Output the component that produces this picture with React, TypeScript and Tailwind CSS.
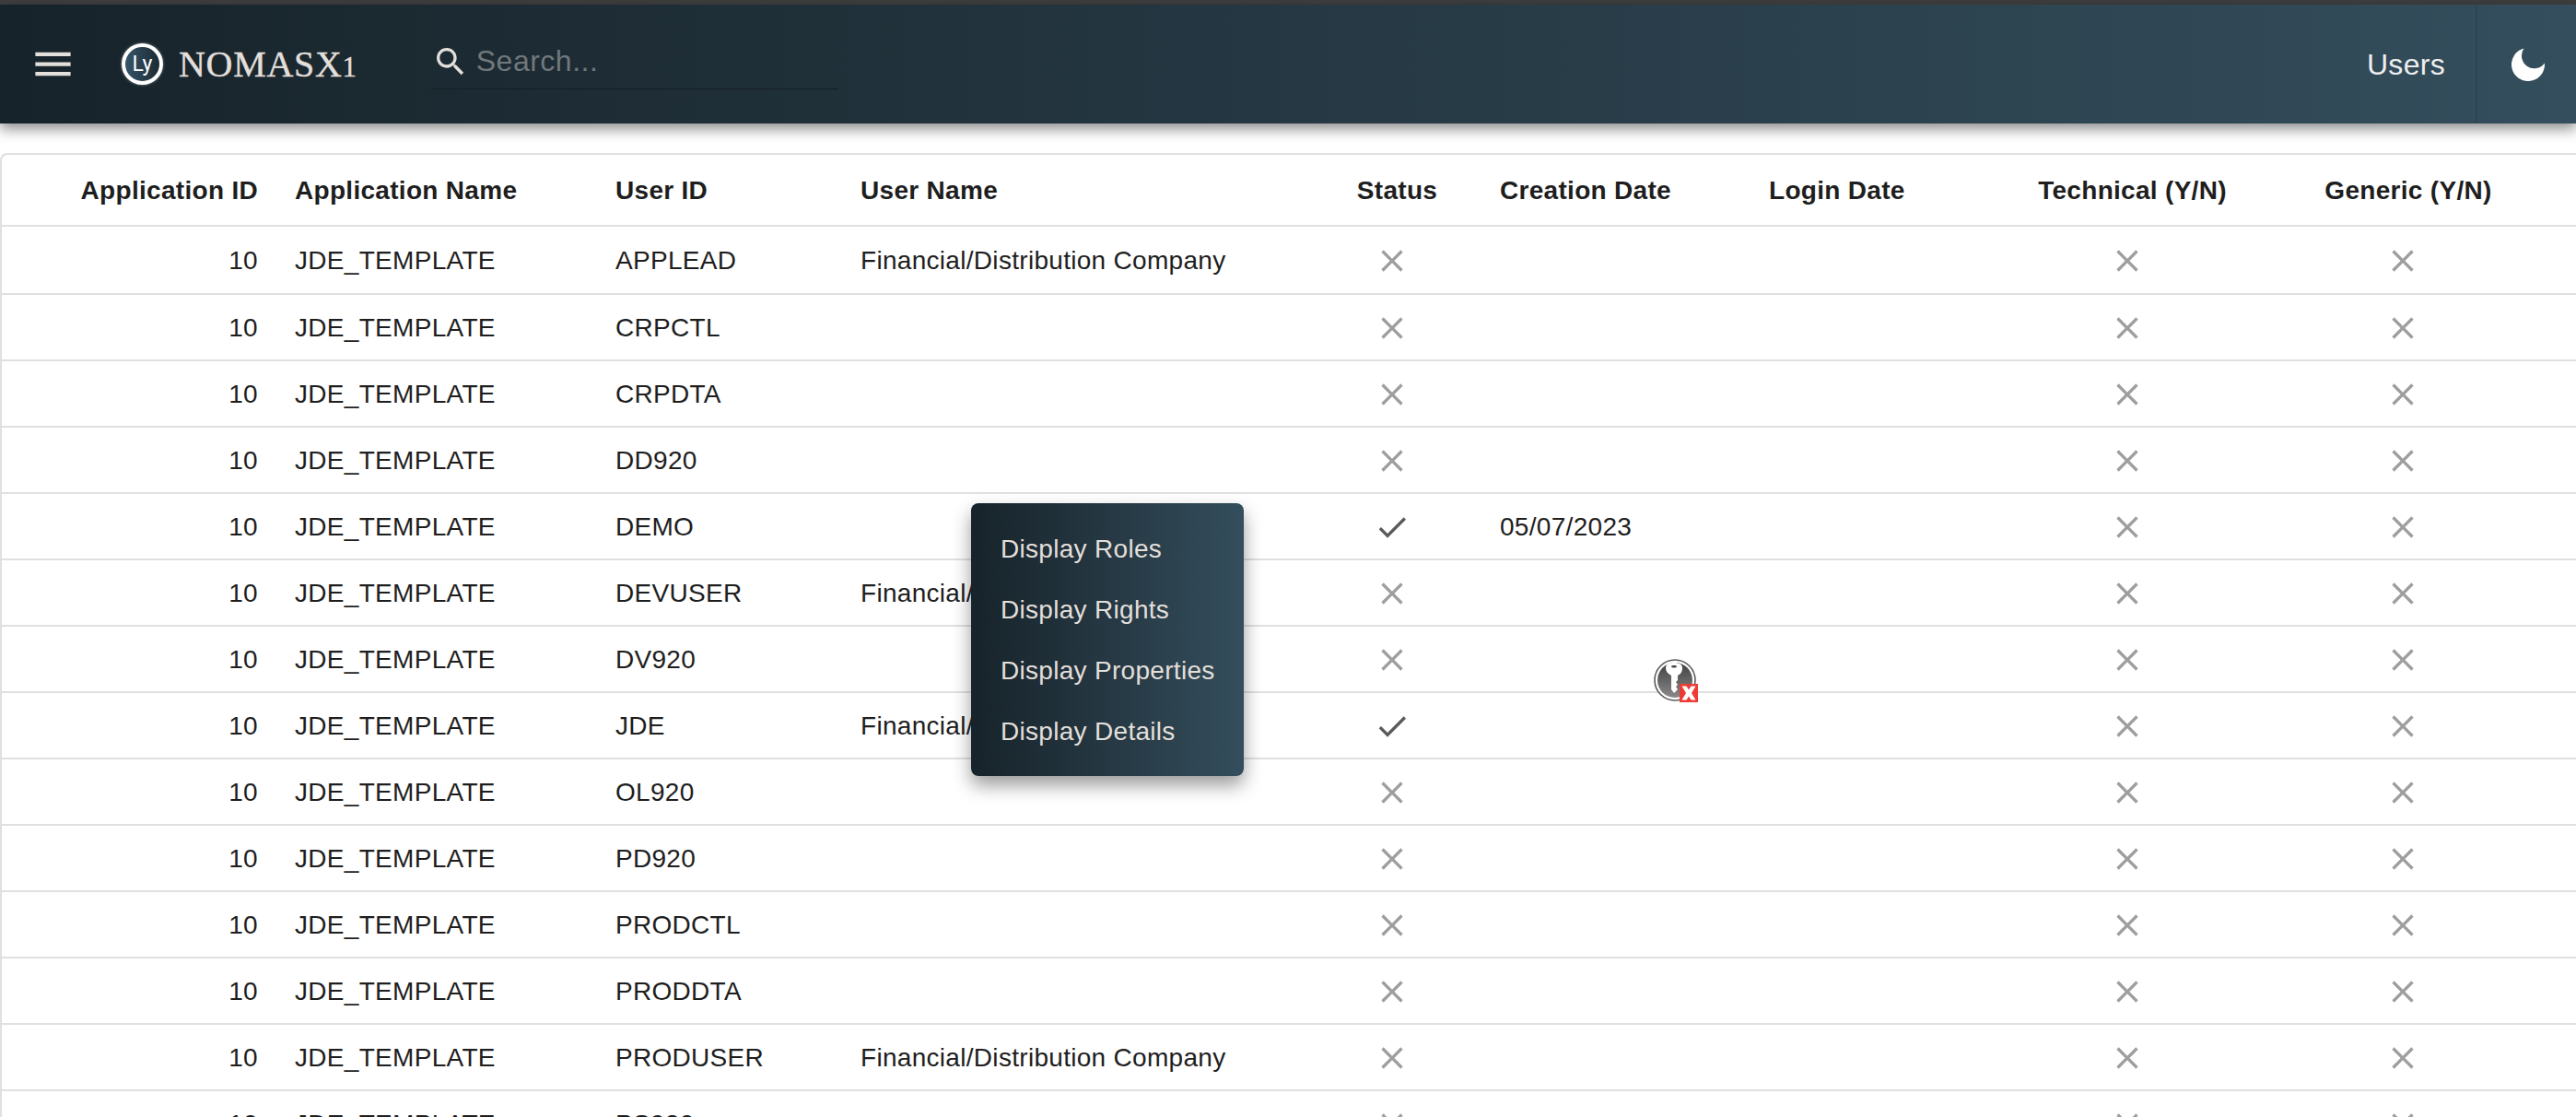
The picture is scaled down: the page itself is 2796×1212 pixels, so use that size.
import type { ReactNode } from "react";

const clearPath =
  "M19 6.41 17.59 5 12 10.59 6.41 5 5 6.41 10.59 12 5 17.59 6.41 19 12 13.41 17.59 19 19 17.59 13.41 12z";
const checkPath = "M9 16.17 4.83 12l-1.42 1.41L9 19 21 7l-1.41-1.41z";
const COMPANY = "Financial/Distribution Company";

const users: { id: string; name?: string; active?: boolean; created?: string }[] = [
  { id: "APPLEAD", name: COMPANY },
  { id: "CRPCTL" },
  { id: "CRPDTA" },
  { id: "DD920" },
  { id: "DEMO", active: true, created: "05/07/2023" },
  { id: "DEVUSER", name: COMPANY },
  { id: "DV920" },
  { id: "JDE", name: COMPANY, active: true },
  { id: "OL920" },
  { id: "PD920" },
  { id: "PRODCTL" },
  { id: "PRODDTA" },
  { id: "PRODUSER", name: COMPANY },
  { id: "PS920" },
];

const gridCols = "grid grid-cols-[298px_348px_266px_539px_116px_331px_292px_233px_366px]";

function BoolIcon({ on }: { on?: boolean }) {
  return (
    <svg
      viewBox="0 0 24 24"
      className={on ? "-mt-[1px] h-10 w-10 fill-[#5a5a5a]" : "-mt-[1px] h-10 w-10 fill-[#9e9e9e]"}
    >
      <path d={on ? checkPath : clearPath} />
    </svg>
  );
}

function HeadCell({ children, className }: { children: ReactNode; className: string }) {
  return <div className={`flex items-center whitespace-nowrap pt-[2px] font-bold ${className}`}>{children}</div>;
}

function UserRow({ user, first }: { user: (typeof users)[number]; first: boolean }) {
  return (
    <div className={`${gridCols} border-b-2 border-[#e0e0e0] pt-[2px] ${first ? "h-[74px]" : "h-[72px]"}`}>
      <div className="flex items-center justify-end pr-[20px]">10</div>
      <div className="flex items-center pl-[20px]">JDE_TEMPLATE</div>
      <div className="flex items-center pl-[20px]">{user.id}</div>
      <div className="flex items-center pl-[20px]">{user.name}</div>
      <div className="flex items-center justify-center">
        <BoolIcon on={user.active} />
      </div>
      <div className="flex items-center pl-[59px]">{user.created}</div>
      <div />
      <div className="flex items-center justify-center">
        <BoolIcon />
      </div>
      <div className="flex items-center justify-center">
        <BoolIcon />
      </div>
    </div>
  );
}

export default function App() {
  return (
    <div className="relative h-screen w-full overflow-hidden bg-white font-['Liberation_Sans',Arial,sans-serif] text-[28px] tracking-[0.3px] text-[#1e1e1e]">
      <div className="h-[5px] bg-[#3e3e3e]" />
      <header className="relative z-10 flex h-[129px] items-center bg-gradient-to-r from-[#17232a] to-[#344e5d] shadow-[0_6px_14px_rgba(0,0,0,0.45)]">
        <svg viewBox="0 0 24 24" className="ml-[32px] h-[51px] w-[51px] fill-[#e3dfda]">
          <path d="M3 18h18v-2H3v2zm0-5h18v-2H3v2zm0-7v2h18V6H3z" />
        </svg>
        <div className="ml-[49px] flex h-[45px] w-[45px] items-center justify-center rounded-full border-[4px] border-white bg-gradient-to-r from-[#37556a] to-[#1b2a33] font-['Roboto',sans-serif] text-[23px] leading-none tracking-normal text-white shadow-[0_0_3px_rgba(255,255,255,0.5)]">
          Ly
        </div>
        <div className="ml-[17px] whitespace-nowrap font-['Liberation_Serif',serif] text-[40px] leading-none tracking-[0.7px] text-[#e3dfda] [-webkit-text-stroke:0.4px_#e3dfda]">
          NOMASX<span className="text-[31px]">1</span>
        </div>
        <div className="ml-[80px] mt-[5px] flex h-[50px] w-[442px] items-start border-b border-[#141e25] pl-[1px]">
          <svg viewBox="0 0 24 24" className="h-10 w-10 shrink-0 fill-[#e3dfda]">
            <path d="M15.5 14h-.79l-.28-.27C15.41 12.59 16 11.11 16 9.5 16 5.91 13.09 3 9.5 3S3 5.91 3 9.5 5.91 16 9.5 16c1.61 0 3.09-.59 4.23-1.57l.27.28v.79l5 4.99L20.49 19l-4.99-5zm-6 0C7.01 14 5 11.99 5 9.5S7.01 5 9.5 5 14 7.01 14 9.5 11.99 14 9.5 14z" />
          </svg>
          <span className="ml-[8px] text-[32px] leading-[38px] tracking-[0.5px] text-[#70787c]">Search...</span>
        </div>
        <div className="ml-auto text-[32px] leading-none text-[#eeeeee]">Users</div>
        <div className="ml-[33px] flex h-full w-[109px] items-center border-l-2 border-[#2d4553] pl-[37px]">
          <svg viewBox="0 0 36 36" className="h-[36px] w-[36px] fill-white">
            <path d="M13.5 .6A18 18 0 1 0 35.9 16.500A13.700 13.700 0 0 1 13.500 .6z" />
          </svg>
        </div>
      </header>

      <main className="mt-[32px] rounded-tl-lg border-l-2 border-t-2 border-[#e0e0e0]">
        <div className={`${gridCols} h-[78px] border-b-2 border-[#e0e0e0]`}>
          <HeadCell className="justify-end pr-[20px]">Application ID</HeadCell>
          <HeadCell className="pl-[20px]">Application Name</HeadCell>
          <HeadCell className="pl-[20px]">User ID</HeadCell>
          <HeadCell className="pl-[20px]">User Name</HeadCell>
          <HeadCell className="justify-center pl-[11px]">Status</HeadCell>
          <HeadCell className="pl-[59px]">Creation Date</HeadCell>
          <HeadCell className="pl-[20px]">Login Date</HeadCell>
          <HeadCell className="justify-center pl-[12px]">Technical (Y/N)</HeadCell>
          <HeadCell className="justify-center pl-[12px]">Generic (Y/N)</HeadCell>
        </div>
        {users.map((user, index) => (
          <UserRow key={user.id} user={user} first={index === 0} />
        ))}
      </main>

      {/* context menu */}
      <div className="absolute left-[1054px] top-[546px] z-20 w-[296px] rounded-lg bg-gradient-to-r from-[#17232a] to-[#344e5d] py-[16px] text-[#e3dfda] shadow-[0_10px_20px_rgba(0,0,0,0.4)]">
        {["Display Roles", "Display Rights", "Display Properties", "Display Details"].map((label) => (
          <div key={label} className="flex h-[66px] items-center whitespace-nowrap pl-[32px] pt-[1px]">
            {label}
          </div>
        ))}
      </div>

      {/* password manager badge */}
      <div className="absolute left-[1795px] top-[715px] z-20 h-[47px] w-[48px]">
        <svg viewBox="0 0 46 46" className="h-[46px] w-[46px]">
          <defs>
            <linearGradient id="keyBg" x1="0" y1="0" x2="0" y2="1">
              <stop offset="0" stopColor="#3f3f3f" />
              <stop offset="1" stopColor="#8a8a8a" />
            </linearGradient>
          </defs>
          <circle cx="23" cy="23" r="22" fill="white" stroke="#5c5c5c" strokeWidth="1.6" />
          <circle cx="23" cy="23" r="19" fill="url(#keyBg)" />
          <path
            d="M22 4c-6 0-9 2-9 6 0 3 2 6 6 8v15l3 4 4-4-2-3 2-2-2-3 2-2v-5c4-2 5-5 5-8 0-4-3-6-9-6zm0 3c1.500 0 3 .4 3 1.200s-1.500 1.300-3 1.300-3-.5-3-1.300S20.500 7 22 7z"
            fill="white"
          />
        </svg>
        <svg viewBox="0 0 20 20" className="absolute bottom-0 right-0 h-[20px] w-[20px]">
          <rect width="20" height="20" fill="#ee3b35" />
          <path d="M2.500 2.500h5L10 6.500l2.500-4h5L13 10l4.500 7.500h-5L10 13.500l-2.500 4h-5L7 10z" fill="white" />
        </svg>
      </div>
    </div>
  );
}
